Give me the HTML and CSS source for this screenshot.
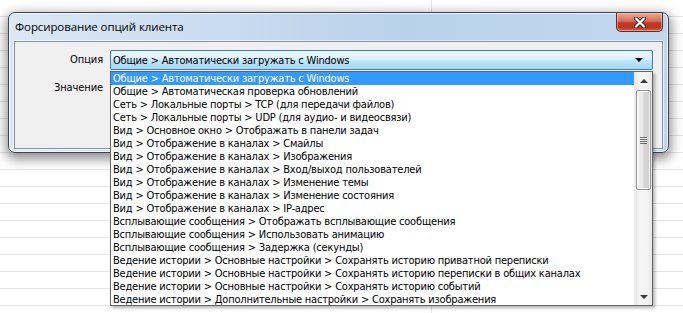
FILE: index.html
```html
<!DOCTYPE html>
<html lang="ru">
<head>
<meta charset="utf-8">
<title>Форсирование опций клиента</title>
<link rel="stylesheet" href="styles.css">
</head>
<body>
<div class="desk">
  <div class="window">
    <div class="titlebar">
      <span class="title">Форсирование опций клиента</span>
      <div class="close">
        <svg width="14" height="11" viewBox="0 0 14 11">
          <path d="M3 1.5 L11 9.5 M11 1.5 L3 9.5" stroke="#4a2a26" stroke-width="4.2" stroke-linecap="round" fill="none"/>
          <path d="M3 1.5 L11 9.5 M11 1.5 L3 9.5" stroke="#ffffff" stroke-width="2.2" stroke-linecap="round" fill="none"/>
        </svg>
      </div>
    </div>
    <div class="client">
      <div class="form">
        <span class="label">Опция</span>
        <div class="combo-wrap">
          <div class="combo">
            <span class="combo-text">Общие &gt; Автоматически загружать с Windows</span>
            <span class="combo-arrow"></span>
          </div>
          <div class="dropdown">
            <ul class="items">
              <li class="item selected">Общие &gt; Автоматически загружать с Windows</li>
              <li class="item">Общие &gt; Автоматическая проверка обновлений</li>
              <li class="item">Сеть &gt; Локальные порты &gt; TCP (для передачи файлов)</li>
              <li class="item">Сеть &gt; Локальные порты &gt; UDP (для аудио- и видеосвязи)</li>
              <li class="item">Вид &gt; Основное окно &gt; Отображать в панели задач</li>
              <li class="item">Вид &gt; Отображение в каналах &gt; Смайлы</li>
              <li class="item">Вид &gt; Отображение в каналах &gt; Изображения</li>
              <li class="item">Вид &gt; Отображение в каналах &gt; Вход/выход пользователей</li>
              <li class="item">Вид &gt; Отображение в каналах &gt; Изменение темы</li>
              <li class="item">Вид &gt; Отображение в каналах &gt; Изменение состояния</li>
              <li class="item">Вид &gt; Отображение в каналах &gt; IP-адрес</li>
              <li class="item">Всплывающие сообщения &gt; Отображать всплывающие сообщения</li>
              <li class="item">Всплывающие сообщения &gt; Использовать анимацию</li>
              <li class="item">Всплывающие сообщения &gt; Задержка (секунды)</li>
              <li class="item">Ведение истории &gt; Основные настройки &gt; Сохранять историю приватной переписки</li>
              <li class="item">Ведение истории &gt; Основные настройки &gt; Сохранять историю переписки в общих каналах</li>
              <li class="item">Ведение истории &gt; Основные настройки &gt; Сохранять историю событий</li>
              <li class="item">Ведение истории &gt; Дополнительные настройки &gt; Сохранять изображения</li>
            </ul>
            <div class="scrollbar">
              <div class="sb-btn"><span class="tri-up"></span></div>
              <div class="sb-track">
                <div class="sb-thumb"><span class="grip"></span></div>
              </div>
              <div class="sb-btn"><span class="tri-down"></span></div>
            </div>
          </div>
        </div>
        <span class="label">Значение</span>
        <div class="field"></div>
      </div>
    </div>
  </div>
</div>
</body>
</html>
```
FILE: styles.css
```css
html, body {
  margin: 0;
  padding: 0;
}
body {
  width: 683px;
  height: 313px;
  overflow: hidden;
  background-color: #ffffff;
  background-image:
    linear-gradient(to right, transparent 431px, #e4e4e4 431px, #e4e4e4 432px, transparent 432px),
    repeating-linear-gradient(to bottom, transparent 0, transparent 16px, #e6e6e6 16px, #e6e6e6 17px);
  font-family: "Noto Sans", "Open Sans", sans-serif;
}
.desk {
  padding: 12px 0 0 8px;
}
.window {
  width: 661px;
  height: 141px;
  box-sizing: border-box;
  border: 1px solid #3a4452;
  border-radius: 7px;
  background: linear-gradient(to right, #dbe7f3 0%, #cadcef 30%, #b9d1ea 60%, #c1d7ee 100%);
  box-shadow: 0 4px 12px 2px rgba(0, 0, 0, 0.45), inset 0 0 0 1px rgba(255, 255, 255, 0.7);
  padding: 0 5px 3px 5px;
  display: flex;
  flex-direction: column;
}
.titlebar {
  height: 28px;
  display: flex;
  align-items: flex-start;
}
.title {
  font-family: "Open Sans", "Noto Sans", sans-serif;
  font-size: 11.5px;
  letter-spacing: -0.1px;
  color: #000;
  padding: 6px 0 0 1px;
  line-height: 16px;
}
.close {
  margin-left: auto;
  width: 47px;
  height: 19px;
  box-sizing: border-box;
  border: 1px solid #5c2c25;
  border-top: none;
  border-radius: 0 0 5px 5px;
  background: linear-gradient(to bottom, #e9a997 0%, #d66e5a 45%, #c13a22 55%, #bd3520 80%, #d26550 100%);
  box-shadow: inset 0 0 0 1px rgba(255, 210, 200, 0.5);
  display: flex;
  align-items: center;
  justify-content: center;
}
.close svg {
  display: block;
}
.client {
  flex: 1;
  border: 1px solid #8094ab;
  box-shadow: 0 0 0 1px rgba(255, 255, 255, 0.6);
  background: #f0f0f0;
}
.form {
  display: grid;
  grid-template-columns: 88px 543px;
  column-gap: 7px;
  row-gap: 7px;
  padding: 8px 0 0 0;
  align-items: center;
}
.label {
  text-align: right;
  font-family: "DejaVu Sans Condensed", "DejaVu Sans", sans-serif;
  font-size: 11px;
  letter-spacing: -0.1px;
  line-height: 16px;
  color: #000;
}
.combo-wrap {
  position: relative;
}
.combo {
  height: 20px;
  box-sizing: border-box;
  border: 1px solid #3c7fb1;
  border-radius: 2px;
  background: linear-gradient(to bottom, #ecf7fd 0%, #dcf1fc 45%, #bde5fb 55%, #a6d7f2 100%);
  display: flex;
  align-items: center;
  padding: 0 9px 0 2px;
}
.combo-text {
  font-family: "DejaVu Sans Condensed", "DejaVu Sans", sans-serif;
  font-size: 11px;
  letter-spacing: -0.2px;
  color: #000;
}
.combo-arrow {
  margin-left: auto;
  width: 0;
  height: 0;
  border-left: 4px solid transparent;
  border-right: 4px solid transparent;
  border-top: 4px solid #000;
}
.field {
  height: 20px;
  border: 1px solid #abadb3;
  background: #fff;
}
.dropdown {
  position: absolute;
  top: 21px;
  left: 0;
  width: 543px;
  height: 235px;
  box-sizing: border-box;
  border: 1px solid #646464;
  background: #fff;
  box-shadow: 2px 2px 3px rgba(0, 0, 0, 0.3);
  display: flex;
  z-index: 2;
}
.items {
  list-style: none;
  margin: 0;
  padding: 0;
  flex: 1;
  overflow: hidden;
}
.item {
  height: 13px;
  line-height: 13px;
  padding-left: 2px;
  font-family: "DejaVu Sans Condensed", "DejaVu Sans", sans-serif;
  font-size: 11px;
  letter-spacing: -0.2px;
  color: #000;
  white-space: nowrap;
}
.item.selected {
  background: #3399ff;
  color: #fff;
}
.scrollbar {
  width: 17px;
  display: flex;
  flex-direction: column;
  background: linear-gradient(to right, #e8e8e8, #f4f4f4 30%, #f4f4f4 70%, #e8e8e8);
  border-left: 1px solid #ececec;
}
.sb-btn {
  height: 17px;
  display: flex;
  align-items: center;
  justify-content: center;
}
.tri-up, .tri-down {
  width: 0;
  height: 0;
  border-left: 4px solid transparent;
  border-right: 4px solid transparent;
}
.tri-up {
  border-bottom: 4px solid #3a3a3a;
}
.tri-down {
  border-top: 4px solid #3a3a3a;
}
.sb-track {
  flex: 1;
  padding: 1px 1px;
}
.sb-thumb {
  height: 100px;
  box-sizing: border-box;
  border: 1px solid #979797;
  border-radius: 2px;
  background: linear-gradient(to right, #f3f3f3 0%, #e8e8e8 45%, #d6d6d6 55%, #cfcfcf 100%);
  box-shadow: inset 0 0 0 1px rgba(255, 255, 255, 0.8);
  display: flex;
  align-items: center;
  justify-content: center;
}
.grip {
  width: 7px;
  height: 7px;
  background: repeating-linear-gradient(to bottom, #555 0, #555 1px, #e8e8e8 1px, #e8e8e8 2px);
  opacity: 0.8;
}
```
